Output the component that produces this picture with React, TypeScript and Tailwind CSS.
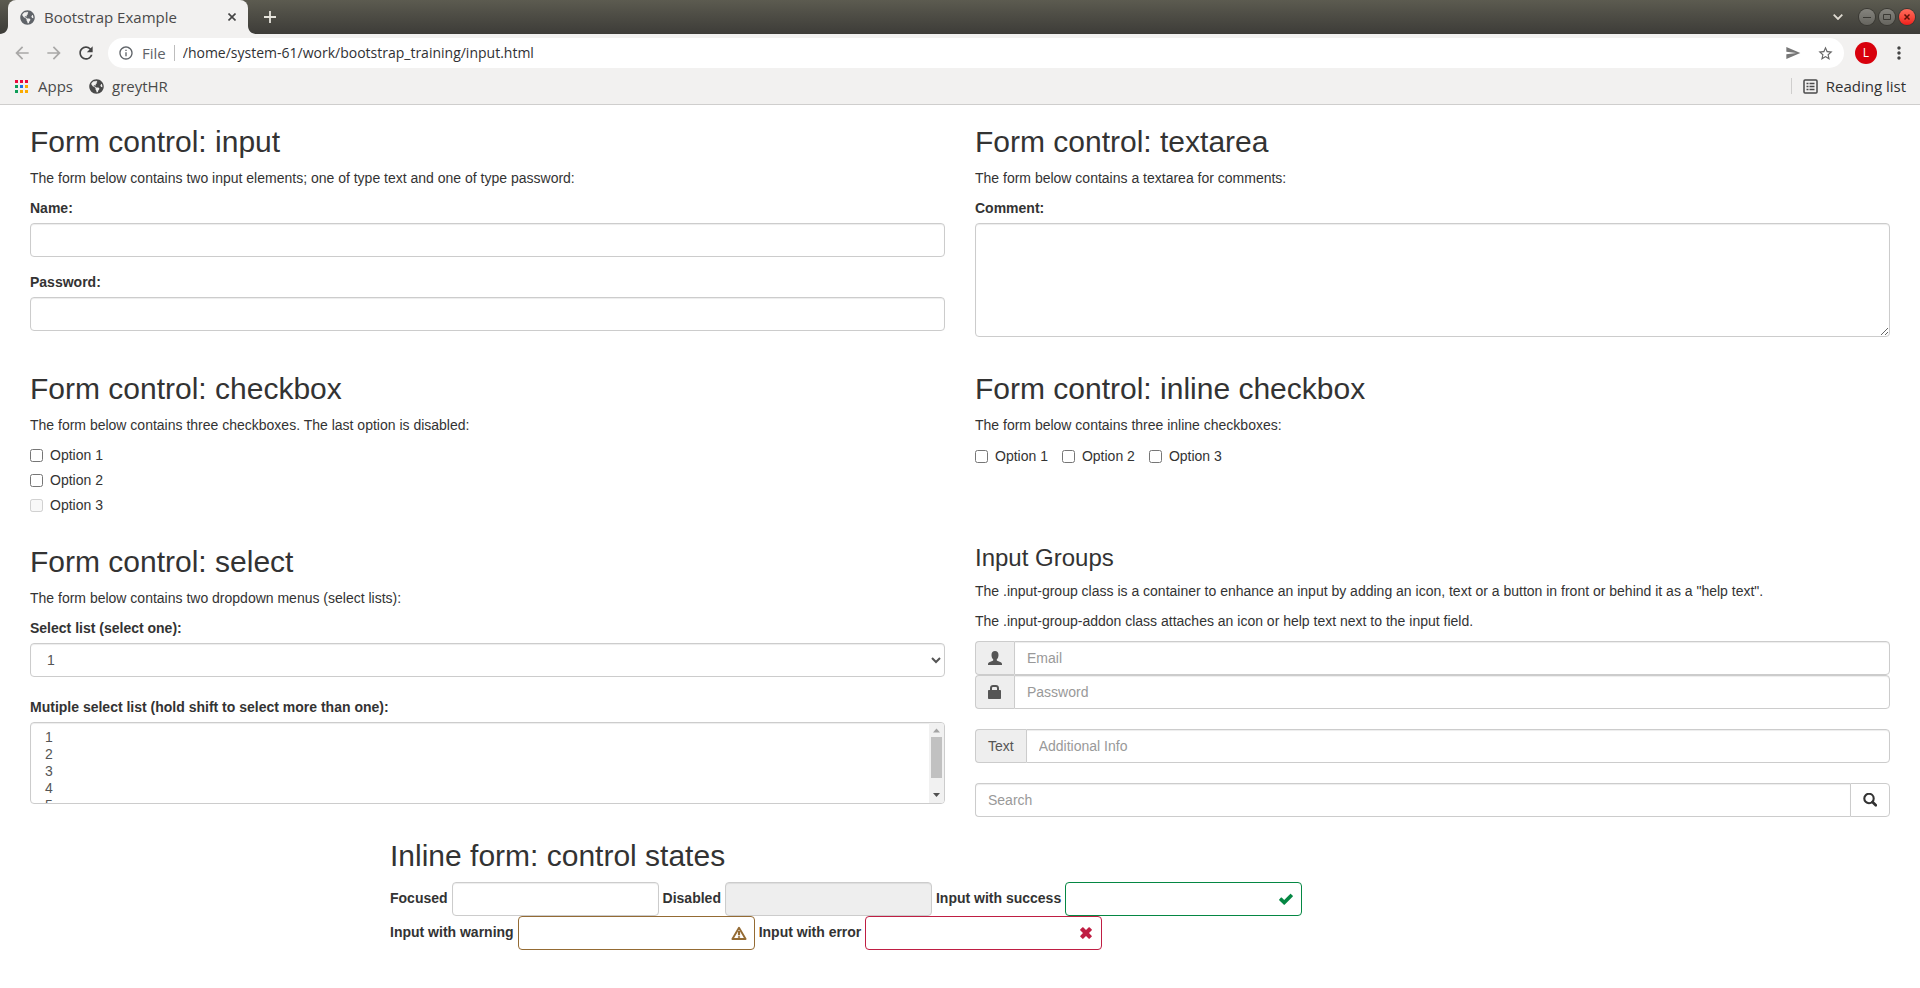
import React from "react";
import { FaGlobeAmericas } from "react-icons/fa";
import {
  MdArrowBack,
  MdArrowForward,
  MdInfoOutline,
  MdMoreVert,
  MdRefresh,
  MdSend,
  MdStarBorder,
} from "react-icons/md";

const control =
  "h-[34px] rounded border border-[#ccc] bg-white px-3 py-1.5 text-sm text-[#555] shadow-[inset_0_1px_1px_rgba(0,0,0,0.075)] outline-none placeholder:text-[#999]";
const heading = "mt-5 mb-2.5 text-[30px]/[33px] font-medium";
const addon =
  "flex items-center rounded-l border border-r-0 border-[#ccc] bg-[#eee] px-3 text-sm leading-none text-[#555]";

function UserIcon() {
  return (
    <svg width="14" height="14" viewBox="0 0 14 14" fill="currentColor" aria-hidden="true">
      <path d="M7 0C9.200 0 10.500 1.500 10.500 3.900c0 1.900-.6 3.200-1.600 4.300-.3.400-.2 1.200.3 1.500l3.600 1.600c.8.400 1.200.9 1.200 1.700v1H0v-1c0-.8.400-1.300 1.200-1.700l3.600-1.600c.5-.3.600-1.100.3-1.500C4.100 7.100 3.500 5.800 3.500 3.900 3.500 1.500 4.800 0 7 0z" />
    </svg>
  );
}

function LockIcon() {
  return (
    <svg width="14" height="14" viewBox="0 0 14 14" fill="currentColor" aria-hidden="true">
      <path
        fillRule="evenodd"
        d="M5 0h3c1.700 0 3 1.300 3 3v2h1.200c.5 0 .8.300.8.800v7.400c0 .5-.3.800-.8.800H.8c-.5 0-.8-.3-.8-.8V5.800C0 5.300.3 5 .8 5H2V3c0-1.700 1.300-3 3-3zm.2 2C4.500 2 4 2.500 4 3.200V5h5V3.200C9 2.500 8.500 2 7.800 2z"
      />
    </svg>
  );
}

function SearchIcon() {
  return (
    <svg width="14" height="14" viewBox="0 0 14 14" fill="none" stroke="currentColor" aria-hidden="true">
      <circle cx="6" cy="5.500" r="4.700" strokeWidth="2.100" />
      <path d="M9.500 9l3.300 3.300" strokeWidth="2.700" strokeLinecap="round" />
    </svg>
  );
}

function CheckIcon() {
  return (
    <svg width="14" height="14" viewBox="0 0 14 14" fill="currentColor" aria-hidden="true">
      <path d="M.2 7.500 2 5.600c.2-.2.500-.2.700 0L5.200 8l6-6.100c.2-.2.500-.2.700 0l1.900 1.800c.2.200.2.500 0 .7l-8.200 8.400c-.2.200-.5.200-.7 0L.2 8.200c-.2-.2-.2-.5 0-.7z" />
    </svg>
  );
}

function CrossIcon() {
  return (
    <svg width="14" height="14" viewBox="0 0 14 14" fill="currentColor" aria-hidden="true">
      <path d="M1.200 3.600 3.500 1.300c.2-.2.500-.2.700 0L7 4.100l2.800-2.800c.2-.2.500-.2.700 0l2.300 2.300c.2.200.2.500 0 .7L10 7.100l2.800 2.800c.2.200.2.500 0 .7l-2.300 2.200c-.2.200-.5.200-.7 0L7 10.100l-2.800 2.700c-.2.200-.5.200-.7 0l-2.300-2.200c-.2-.2-.2-.5 0-.7L4 7.100 1.200 4.300c-.2-.2-.2-.5 0-.7z" />
    </svg>
  );
}

function WarningIcon() {
  return (
    <svg width="16" height="14" viewBox="0 0 16 14" fill="none" stroke="currentColor" aria-hidden="true">
      <path d="M8 1.800 14.600 13H1.400z" strokeWidth="1.900" strokeLinejoin="round" />
      <path d="M8 5v4.200M8 10.200v1.600" strokeWidth="2.200" />
    </svg>
  );
}

function WindowButton({ label, close, children }: { label: string; close?: boolean; children: React.ReactNode }) {
  return (
    <button
      aria-label={label}
      className={
        close
          ? "size-4 rounded-full bg-linear-to-b from-[#ff6a5a] to-[#f01818] text-[#5c1208] ring-1 ring-[#3a3934]"
          : "size-4 rounded-full bg-linear-to-b from-[#85847e] to-[#66655f] text-[#3a3934] ring-1 ring-[#3a3934]"
      }
    >
      <svg width="16" height="16" viewBox="0 0 16 16" fill="none" stroke="currentColor">
        {children}
      </svg>
    </button>
  );
}

function BrowserChrome() {
  const dots = ["#ea0a3c", "#ea0a3c", "#ea0a3c", "#0f9d58", "#1a73e8", "#fbab00", "#0f9d58", "#fbab00", "#fbab00"];
  return (
    <header className="border-b border-[#cfcecd] bg-[#f2f1f0] font-['Open_Sans','Noto_Sans',sans-serif] text-[15px]/5 text-[#4a4a4a]">
      <div className="flex h-[34px] items-stretch bg-linear-to-b from-[#5c5b50] to-[#3d3c38]">
        <svg className="self-end" width="8" height="8" viewBox="0 0 8 8" fill="#f2f1f0" aria-hidden="true">
          <path d="M8 0v8H0c4.400 0 8-3.600 8-8z" />
        </svg>
        <div className="flex w-60 items-center rounded-t-lg bg-[#f2f1f0] pr-2 pl-3">
          <FaGlobeAmericas className="size-[15px] text-[#5f6368]" />
          <span className="ml-[9px] grow">Bootstrap Example</span>
          <button aria-label="Close tab" className="p-1">
            <svg width="8" height="8" viewBox="0 0 8 8" stroke="#444" strokeWidth="1.600">
              <path d="M.5.5l7 7M7.500.5l-7 7" />
            </svg>
          </button>
        </div>
        <svg className="self-end" width="8" height="8" viewBox="0 0 8 8" fill="#f2f1f0" aria-hidden="true">
          <path d="M0 0v8h8C3.600 8 0 4.400 0 0z" />
        </svg>
        <button aria-label="New tab" className="ml-2">
          <svg width="12" height="12" viewBox="0 0 12 12" stroke="#e6e4dc" strokeWidth="1.800">
            <path d="M6 0v12M0 6h12" />
          </svg>
        </button>
        <div className="ml-auto flex items-center gap-1 pr-[5px]">
          <button aria-label="Search tabs" className="mr-3">
            <svg width="10" height="6" viewBox="0 0 10 6" fill="none" stroke="#dfdbd2" strokeWidth="1.800">
              <path d="M.7.7 5 5 9.300.7" />
            </svg>
          </button>
          <WindowButton label="Minimize">
            <path d="M4 8.500h8" />
          </WindowButton>
          <WindowButton label="Maximize">
            <path d="M4.500 5.500h7v5h-7z" />
          </WindowButton>
          <WindowButton label="Close window" close>
            <path d="M5.500 5.500l5 5M10.500 5.500l-5 5" strokeWidth="1.500" />
          </WindowButton>
        </div>
      </div>

      <div className="flex h-[38px] items-center pr-[11px] pl-3">
        <button aria-label="Back">
          <MdArrowBack className="size-5 text-[#a9a8a7]" />
        </button>
        <button aria-label="Forward" className="ml-3">
          <MdArrowForward className="size-5 text-[#a9a8a7]" />
        </button>
        <button aria-label="Reload" className="ml-3">
          <MdRefresh className="size-5 text-[#444]" />
        </button>
        <div className="ml-3 flex h-[30px] grow items-center rounded-full bg-white pr-2.5 pl-2.5">
          <MdInfoOutline className="size-4 text-[#5f6368]" />
          <span className="ml-2 text-[#5f6368]">File</span>
          <span className="mx-2 h-4 w-px bg-[#bdbdbd]" />
          <input
            aria-label="Address"
            className="grow bg-transparent text-sm text-[#303134] outline-none"
            defaultValue="/home/system-61/work/bootstrap_training/input.html"
          />
          <button aria-label="Share">
            <MdSend className="size-4 text-[#777]" />
          </button>
          <button aria-label="Bookmark" className="ml-4">
            <MdStarBorder className="size-[17px] text-[#666]" />
          </button>
        </div>
        <button
          aria-label="Profile"
          className="ml-[11px] flex size-[22px] items-center justify-center rounded-full bg-[#d8000c] text-xs text-white"
        >
          L
        </button>
        <button aria-label="Menu" className="ml-3">
          <MdMoreVert className="size-5 text-[#444]" />
        </button>
      </div>

      <nav className="flex h-8 items-center pr-3.5 pb-1 pl-[15px]">
        <a href="#apps" className="flex items-center gap-2.5">
          <svg width="13" height="13" viewBox="0 0 13 13" aria-hidden="true">
            {dots.map((fill, i) => (
              <rect key={i} x={(i % 3) * 5} y={Math.floor(i / 3) * 5} width="3" height="3" fill={fill} />
            ))}
          </svg>
          Apps
        </a>
        <a href="#greythr" className="ml-4 flex items-center gap-2">
          <FaGlobeAmericas className="size-[15px]" />
          greytHR
        </a>
        <span className="ml-auto h-4 w-px bg-[#cfcecd]" />
        <button className="ml-[11px] flex items-center gap-2 text-[#303030]">
          <svg width="15" height="15" viewBox="0 0 15 15" fill="none" stroke="#4a4a4a" aria-hidden="true">
            <rect x="1" y="1" width="13" height="13" rx="1" strokeWidth="1.500" />
            <path d="M3.500 4.500h2M3.500 7.500h2M3.500 10.500h2M6.500 4.500h5M6.500 7.500h5M6.500 10.500h5" strokeWidth="1.500" />
          </svg>
          Reading list
        </button>
      </nav>
    </header>
  );
}

function CheckOption({ label, disabled }: { label: string; disabled?: boolean }) {
  return (
    <label className="inline-flex gap-[7px]">
      <input type="checkbox" disabled={disabled} className="mt-1 size-[13px]" />
      {label}
    </label>
  );
}

function ListScrollbar() {
  return (
    <div
      aria-hidden="true"
      className="pointer-events-none absolute inset-y-px right-px flex w-[15px] flex-col items-center rounded-r-[3px] bg-[#f1f1f1]"
    >
      <svg width="15" height="14" viewBox="0 0 15 14" fill="#a3a3a3">
        <path d="M4 9.500 7.500 5.500 11 9.500z" />
      </svg>
      <span className="h-[41px] w-[11px] bg-[#c1c1c1]" />
      <svg className="mt-auto" width="15" height="16" viewBox="0 0 15 16" fill="#505050">
        <path d="M4 6 7.500 10 11 6z" />
      </svg>
    </div>
  );
}

function InlineField({
  id,
  label,
  tone,
  disabled,
  icon,
}: {
  id: string;
  label: string;
  tone?: string;
  disabled?: boolean;
  icon?: React.ReactNode;
}) {
  return (
    <div className="flex items-center gap-1">
      <label htmlFor={id} className="pb-0.5 font-bold">
        {label}
      </label>
      <div className={"relative " + (tone ?? "")}>
        <input
          id={id}
          type="text"
          disabled={disabled}
          className={
            icon
              ? "block h-[34px] w-[237px] rounded border border-current bg-white px-3 text-sm outline-none"
              : control + " block w-[207px] disabled:bg-[#eee]"
          }
        />
        {icon && (
          <span className="pointer-events-none absolute inset-y-0 right-0 flex w-8 items-center justify-center">
            {icon}
          </span>
        )}
      </div>
    </div>
  );
}

export default function App() {
  return (
    <div className="min-h-screen bg-white">
      <BrowserChrome />
      <main className="font-['Liberation_Sans',Arial,sans-serif] text-sm/5 text-[#333]">
        <div className="grid grid-cols-2 gap-x-[30px] px-[30px]">
          <section>
            <h2 className={heading}>Form control: input</h2>
            <p className="mb-2.5">The form below contains two input elements; one of type text and one of type password:</p>
            <div className="mb-[15px] flex flex-col">
              <label htmlFor="name" className="mb-[5px] self-start font-bold">
                Name:
              </label>
              <input id="name" type="text" className={control} />
            </div>
            <div className="mb-[15px] flex flex-col">
              <label htmlFor="pwd" className="mb-[5px] self-start font-bold">
                Password:
              </label>
              <input id="pwd" type="password" className={control} />
            </div>
          </section>

          <section>
            <h2 className={heading}>Form control: textarea</h2>
            <p className="mb-2.5">The form below contains a textarea for comments:</p>
            <div className="mb-[15px] flex flex-col">
              <label htmlFor="comment" className="mb-[5px] self-start font-bold">
                Comment:
              </label>
              <textarea
                id="comment"
                rows={5}
                className="rounded border border-[#ccc] bg-white px-3 py-1.5 text-sm/5 text-[#555] shadow-[inset_0_1px_1px_rgba(0,0,0,0.075)] outline-none"
              />
            </div>
          </section>

          <section>
            <h2 className={heading}>Form control: checkbox</h2>
            <p className="mb-2.5">The form below contains three checkboxes. The last option is disabled:</p>
            <div className="mb-2.5 flex flex-col items-start gap-[5px]">
              <CheckOption label="Option 1" />
              <CheckOption label="Option 2" />
              <CheckOption label="Option 3" disabled />
            </div>
          </section>

          <section>
            <h2 className={heading}>Form control: inline checkbox</h2>
            <p className="mb-[11px]">The form below contains three inline checkboxes:</p>
            <div className="flex gap-3.5">
              <CheckOption label="Option 1" />
              <CheckOption label="Option 2" />
              <CheckOption label="Option 3" />
            </div>
          </section>

          <section>
            <h2 className={heading}>Form control: select</h2>
            <p className="mb-2.5">The form below contains two dropdown menus (select lists):</p>
            <div className="flex flex-col">
              <label htmlFor="sel1" className="mb-[5px] self-start font-bold">
                Select list (select one):
              </label>
              <select id="sel1" className={control + " mb-5"}>
                <option>1</option>
                <option>2</option>
                <option>3</option>
                <option>4</option>
              </select>
              <label htmlFor="sel2" className="mb-[5px] self-start font-bold">
                Mutiple select list (hold shift to select more than one):
              </label>
              <div className="relative">
                <select
                  id="sel2"
                  multiple
                  className="block h-[82px] w-full rounded border border-[#ccc] bg-white px-3 py-1.5 text-sm text-[#555] shadow-[inset_0_1px_1px_rgba(0,0,0,0.075)] outline-none"
                >
                  <option className="min-h-[17px] px-0.5">1</option>
                  <option className="min-h-[17px] px-0.5">2</option>
                  <option className="min-h-[17px] px-0.5">3</option>
                  <option className="min-h-[17px] px-0.5">4</option>
                  <option className="min-h-[17px] px-0.5">5</option>
                </select>
                <ListScrollbar />
              </div>
            </div>
          </section>

          <section>
            <h3 className="mt-5 mb-2.5 text-2xl/[26px] font-medium">Input Groups</h3>
            <p className="mb-2.5">
              The .input-group class is a container to enhance an input by adding an icon, text or a button in front or
              behind it as a "help text".
            </p>
            <p className="mb-2.5">The .input-group-addon class attaches an icon or help text next to the input field.</p>
            <div className="flex">
              <label htmlFor="email" aria-label="Email" className={addon}>
                <UserIcon />
              </label>
              <input id="email" type="text" placeholder="Email" className={control + " grow rounded-l-none"} />
            </div>
            <div className="mb-5 flex">
              <label htmlFor="password" aria-label="Password" className={addon}>
                <LockIcon />
              </label>
              <input id="password" type="password" placeholder="Password" className={control + " grow rounded-l-none"} />
            </div>
            <div className="mb-5 flex">
              <label htmlFor="msg" className={addon}>
                Text
              </label>
              <input id="msg" type="text" placeholder="Additional Info" className={control + " grow rounded-l-none"} />
            </div>
            <div className="flex">
              <input
                aria-label="Search"
                type="text"
                placeholder="Search"
                className={control + " grow rounded-r-none border-r-0"}
              />
              <button aria-label="Submit search" className="rounded-r border border-[#ccc] bg-white px-3 text-[#333]">
                <SearchIcon />
              </button>
            </div>
          </section>
        </div>

        <section className="mx-auto max-w-[1170px] px-[15px] pt-0.5">
          <h2 className={heading}>Inline form: control states</h2>
          <form className="flex flex-wrap gap-x-1">
            <InlineField id="focused" label="Focused" />
            <InlineField id="disabled" label="Disabled" disabled />
            <InlineField id="success" label="Input with success" tone="text-[#058743]" icon={<CheckIcon />} />
            <InlineField id="warning" label="Input with warning" tone="text-[#946b34]" icon={<WarningIcon />} />
            <InlineField id="error" label="Input with error" tone="text-[#bf1e43]" icon={<CrossIcon />} />
          </form>
        </section>
      </main>
    </div>
  );
}
